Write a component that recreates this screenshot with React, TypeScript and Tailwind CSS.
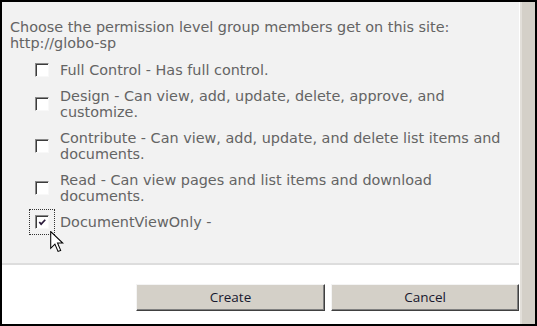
import React from 'react';

const levels = [
  { label: 'Full Control - Has full control.' },
  { label: 'Design - Can view, add, update, delete, approve, and customize.' },
  { label: 'Contribute - Can view, add, update, and delete list items and documents.' },
  { label: 'Read - Can view pages and list items and download documents.' },
  { label: 'DocumentViewOnly -', checked: true },
];

function CheckBox({ checked }: { checked?: boolean }) {
  return (
    <span
      className={`relative block w-[14px] h-[14px] shrink-0 bg-white border border-t-[#8a8a8a] border-l-[#8a8a8a] border-r-[#f8f8f8] border-b-[#f8f8f8] shadow-[inset_1px_1px_0_#3c3c3c] ${
        checked ? 'outline outline-1 outline-dotted outline-[#333] outline-offset-[5px]' : ''
      }`}
    >
      {checked && (
        <svg viewBox="0 0 12 12" className="absolute left-[1px] top-[1px] w-[11px] h-[11px]">
          <path d="M2.5 5.5 L4.5 7.8 L9 3" fill="none" stroke="#2a1a3a" strokeWidth="1.8" />
        </svg>
      )}
    </span>
  );
}

function Cursor() {
  return (
    <svg
      viewBox="0 0 13 21"
      className="absolute left-[48px] top-[229px] w-[14px] h-[22px] pointer-events-none"
    >
      <path
        d="M0.5 0.5 L0.5 16.5 L4.5 12.5 L7.5 19.5 L10 18.5 L7 11.5 L12 11.5 Z"
        fill="white"
        stroke="black"
        strokeWidth="1"
        strokeLinejoin="miter"
      />
    </svg>
  );
}

export default function App() {
  return (
    <div className="relative w-[537px] h-[326px] border-2 border-black flex bg-white overflow-hidden">
      {/* Main column */}
      <div className="w-[517px] flex flex-col">
        <div className="h-[263px] bg-[#f2f2f2] border-b-2 border-[#dddddd] pl-[8px] pt-[17px] font-['DejaVu_Sans',Verdana,sans-serif] text-[14.4px] leading-[16px] text-[#646464]">
          <p>
            Choose the permission level group members get on this site:
            <br />
            http://globo-sp
          </p>
          <div className="mt-[6px] flex flex-col">
            {levels.map(l => (
              <div key={l.label} className="flex items-center py-[5px] pl-[25px]">
                <CheckBox checked={l.checked} />
                <span className="ml-[11px] w-[445px]">{l.label}</span>
              </div>
            ))}
          </div>
        </div>
        <div className="flex-1 bg-white flex justify-end items-start gap-[6px] pt-[19px]">
          <button className="w-[189px] h-[27px] bg-[#d4d0c8] border-t border-l border-[#f4f4f4] border-r border-b border-r-[#404040] border-b-[#404040] shadow-[inset_-1px_-1px_0_#808080] font-['Open_Sans',Arial,sans-serif] text-[13.5px] text-[#18182e]">
            Create
          </button>
          <button className="w-[188px] h-[27px] bg-[#d4d0c8] border-t border-l border-[#f4f4f4] border-r border-b border-r-[#404040] border-b-[#404040] shadow-[inset_-1px_-1px_0_#808080] font-['Open_Sans',Arial,sans-serif] text-[13.5px] text-[#18182e]">
            Cancel
          </button>
        </div>
      </div>
      {/* Right frame strip */}
      <div className="flex-1 bg-[#d4d0c8] border-l border-white shadow-[inset_2px_0_0_#e2dfd9]" />
      <Cursor />
    </div>
  );
}
